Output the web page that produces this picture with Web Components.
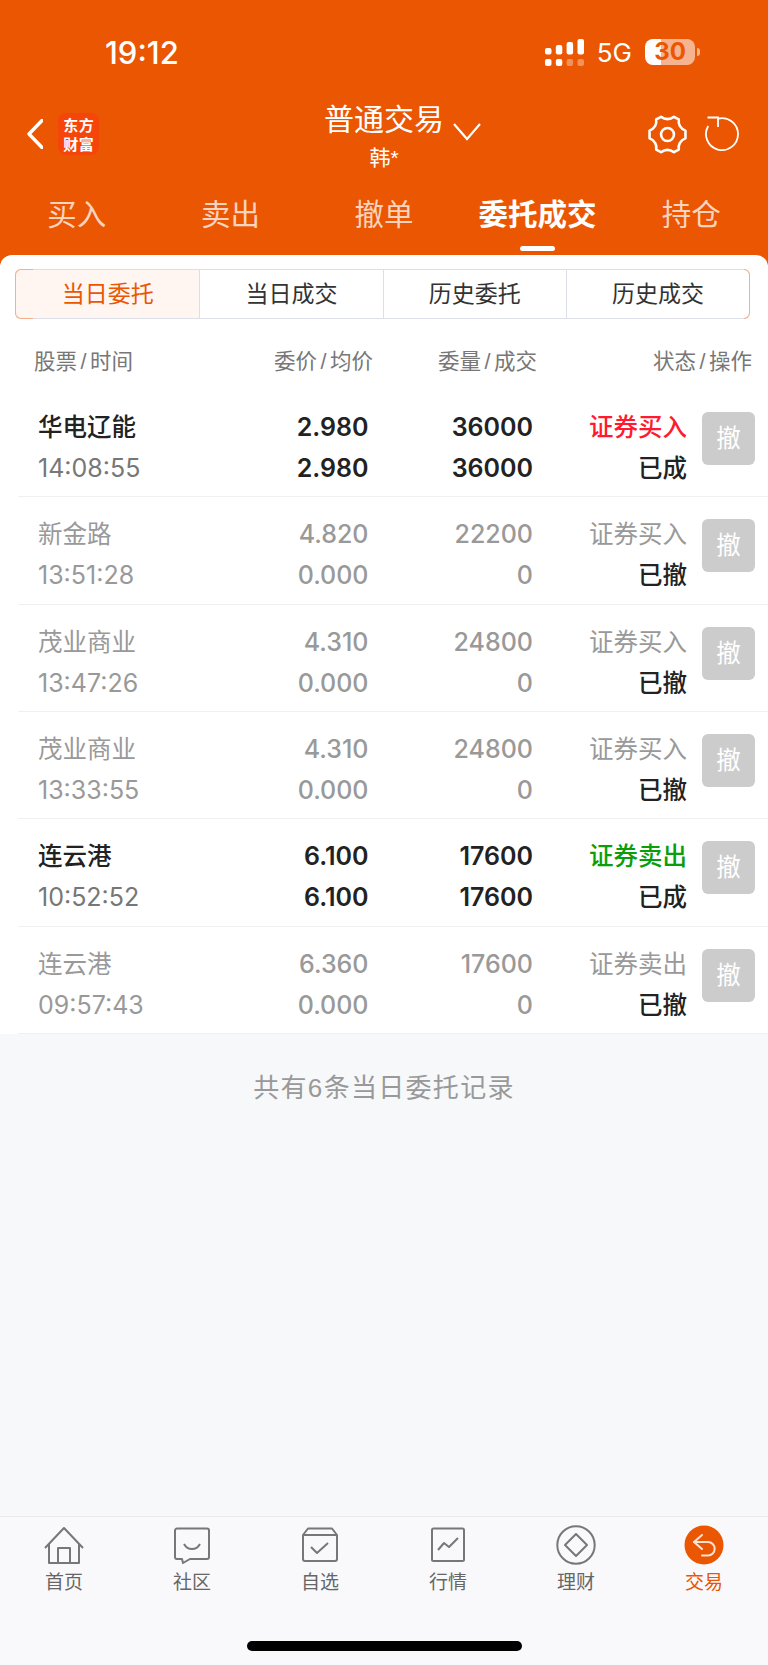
<!DOCTYPE html>
<html lang="zh">
<head>
<meta charset="utf-8">
<title>委托成交</title>
<style>
	html, body {
		margin: 0;
		padding: 0;
		background: #f7f8fa;
	}
	body {
		font-family: "Liberation Sans", "Noto Sans CJK SC", sans-serif;
	}
</style>
</head>
<body>
<trade-page>
	<status-bar slot="top"></status-bar>
	<nav-bar slot="top"></nav-bar>
	<main-tabs slot="top"></main-tabs>

	<segment-tabs items="当日委托,当日成交,历史委托,历史成交" active="0"></segment-tabs>
	<table-head></table-head>
	<order-row name="华电辽能" time="14:08:55" price="2.980" avg="2.980" qty="36000" done="36000" side="证券买入" state="已成" tone="buy"></order-row>
	<order-row name="新金路" time="13:51:28" price="4.820" avg="0.000" qty="22200" done="0" side="证券买入" state="已撤"></order-row>
	<order-row name="茂业商业" time="13:47:26" price="4.310" avg="0.000" qty="24800" done="0" side="证券买入" state="已撤"></order-row>
	<order-row name="茂业商业" time="13:33:55" price="4.310" avg="0.000" qty="24800" done="0" side="证券买入" state="已撤"></order-row>
	<order-row name="连云港" time="10:52:52" price="6.100" avg="6.100" qty="17600" done="17600" side="证券卖出" state="已成" tone="sell"></order-row>
	<order-row name="连云港" time="09:57:43" price="6.360" avg="0.000" qty="17600" done="0" side="证券卖出" state="已撤"></order-row>

	<span slot="summary">共有6条当日委托记录</span>

	<tab-bar slot="bottom"></tab-bar>
</trade-page>

<script>
const ORANGE = "#eb5602";

class TradePage extends HTMLElement {
	constructor() {
		super();
		this.attachShadow({ mode: "open" }).innerHTML = `
			<style>
				:host {
					display: flex;
					flex-direction: column;
					width: 768px;
					height: 1665px;
					overflow: hidden;
					background: #f7f8fa;
				}
				.top {
					background: ${ORANGE};
					height: 265px;
					flex: none;
				}
				.card {
					background: #fff;
					border-radius: 12px 12px 0 0;
					margin-top: -10px;
					padding-top: 14px;
					flex: none;
				}
				.summary {
					flex: 1;
					text-align: center;
					padding-top: 36px;
					font-size: 26px;
					line-height: 36px;
					color: #999;
					letter-spacing: 1.3px;
				}
			</style>
			<div class="top"><slot name="top"></slot></div>
			<div class="card"><slot></slot></div>
			<div class="summary"><slot name="summary"></slot></div>
			<slot name="bottom"></slot>`;
	}
}

class StatusBar extends HTMLElement {
	constructor() {
		super();
		this.attachShadow({ mode: "open" }).innerHTML = `
			<style>
				:host {
					display: flex;
					align-items: center;
					justify-content: space-between;
					height: 50px;
					padding: 27px 68px 0 105px;
					color: #fff;
				}
				.time {
					font-size: 31px;
					font-weight: 500;
					font-family: Inter, sans-serif;
				}
				.right {
					display: flex;
					align-items: center;
				}
				.net {
					font-family: Inter, sans-serif;
					font-size: 26px;
					margin: 0 13px;
				}
				.battery {
					width: 50px;
					height: 26px;
					border-radius: 8px;
					font: 700 24px/26px Inter, sans-serif;
					color: ${ORANGE};
					text-align: center;
					background: linear-gradient(90deg, #fff 32%, #f6b38f 32%);
				}
				.nub {
					width: 3px;
					height: 8px;
					margin-left: 2px;
					background: #f6b38f;
					border-radius: 0 3px 3px 0;
				}
			</style>
			<span class="time">19:12</span>
			<span class="right">
				<svg width="39" height="27" viewBox="0 0 39 27" fill="#fff">
					<rect x="0" y="9" width="6.500" height="6.500" rx="2"/>
					<rect x="10.800" y="6" width="6.500" height="9.500" rx="2"/>
					<rect x="21.600" y="3" width="6.500" height="12.500" rx="2"/>
					<rect x="32.500" y="0" width="6.500" height="15.500" rx="2"/>
					<rect x="0" y="20" width="6.500" height="7" rx="2"/>
					<rect x="10.800" y="20" width="6.500" height="7" rx="2"/>
					<rect x="21.600" y="20" width="6.500" height="7" rx="2" opacity=".35"/>
					<rect x="32.500" y="20" width="6.500" height="7" rx="2" opacity=".35"/>
				</svg>
				<span class="net">5G</span>
				<span class="battery">30</span>
				<span class="nub"></span>
			</span>`;
	}
}

class NavBar extends HTMLElement {
	constructor() {
		super();
		this.attachShadow({ mode: "open" }).innerHTML = `
			<style>
				:host {
					display: grid;
					grid-template-columns: 1fr auto 1fr;
					height: 95px;
					padding: 23px 27px 0 27px;
					color: #fff;
				}
				.left, .right {
					display: flex;
					align-items: center;
					padding-bottom: 27px;
				}
				.left {
					gap: 15px;
				}
				.right {
					justify-content: flex-end;
					gap: 16px;
				}
				.logo {
					width: 41px;
					height: 42px;
					border-radius: 8px;
					background: #f6450a;
					display: grid;
					grid-template-columns: 1fr 1fr;
					justify-items: center;
					align-items: center;
					font: 700 15px/19px "Noto Sans CJK SC", sans-serif;
					padding: 2px 5px;
					box-sizing: border-box;
				}
				.center {
					position: relative;
					text-align: center;
				}
				.title {
					font-size: 30px;
					line-height: 40px;
				}
				.user {
					font-size: 21px;
					line-height: 26px;
					margin-top: 5px;
				}
				.chevron {
					position: absolute;
					top: 23px;
					left: calc(100% + 9px);
				}
			</style>
			<div class="left">
				<svg width="16" height="30" viewBox="0 0 16 30" fill="none" stroke="#fff" stroke-width="3.400" stroke-linecap="round" stroke-linejoin="round">
					<path d="M15 1.500 2 15l13 13.500"/>
				</svg>
				<div class="logo"><span>东</span><span>方</span><span>财</span><span>富</span></div>
			</div>
			<div class="center">
				<div class="title">普通交易</div>
				<div class="user">韩*</div>
				<svg class="chevron" width="28" height="18" viewBox="0 0 28 18" fill="none" stroke="#fff" stroke-width="2.200">
					<path d="M1 1l13 15L27 1"/>
				</svg>
			</div>
			<div class="right">
				<svg width="43" height="43" viewBox="0 0 40 40" fill="none" stroke="#fff" stroke-width="2.400" stroke-linejoin="round">
					<path d="M14 3.500c2 1.600 3.800 2.200 6 2.200s4-.6 6-2.200l4.500 2.500c-.4 2.600 0 4.500 1.100 6.300 1.100 1.900 2.600 3.200 5.100 4.100v7.200c-2.500.9-4 2.200-5.100 4.100-1.100 1.800-1.500 3.700-1.100 6.300l-4.500 2.500c-2-1.600-3.800-2.200-6-2.200s-4 .6-6 2.200l-4.500-2.500c.4-2.600 0-4.500-1.100-6.300-1.100-1.900-2.600-3.200-5.100-4.100v-7.200c2.500-.9 4-2.200 5.100-4.100 1.100-1.800 1.500-3.700 1.100-6.300z"/>
					<circle cx="20" cy="20" r="6"/>
				</svg>
				<svg width="36" height="36" viewBox="0 0 36 36" fill="none" stroke="#fff" stroke-width="1.800">
					<path d="M13 2.600A16 16 0 1 1 3.200 10"/>
					<path d="M2.500 1.500h10.500v9.500"/>
				</svg>
			</div>`;
	}
}

class MainTabs extends HTMLElement {
	constructor() {
		super();
		let items = ["买入", "卖出", "撤单", "委托成交", "持仓"];
		this.attachShadow({ mode: "open" }).innerHTML = `
			<style>
				:host {
					display: grid;
					grid-template-columns: repeat(5, 1fr);
				}
				.tab {
					position: relative;
					text-align: center;
					font-size: 29.500px;
					line-height: 40px;
					color: rgba(255, 255, 255, 0.75);
					padding-bottom: 20px;
				}
				.on {
					color: #fff;
					font-weight: 700;
				}
				.on::after {
					content: "";
					position: absolute;
					left: 59px;
					bottom: 4px;
					width: 35px;
					height: 5px;
					border-radius: 3px;
					background: #fff;
				}
			</style>
			${items.map((t, i) => `<div class="tab ${i === 3 ? "on" : ""}">${t}</div>`).join("")}`;
	}
}

class SegmentTabs extends HTMLElement {
	constructor() {
		super();
		let items = this.getAttribute("items").split(",");
		let active = Number(this.getAttribute("active"));
		this.attachShadow({ mode: "open" }).innerHTML = `
			<style>
				:host {
					display: grid;
					position: relative;
					grid-template-columns: repeat(4, 1fr);
					margin: 0 18px 0 15px;
					height: 50px;
					box-sizing: border-box;
					border: 1px solid #dcdfe8;
					border-radius: 6px;
				}
				:host::before, :host::after {
					content: "";
					position: absolute;
					top: -1px;
					bottom: -1px;
					width: 17px;
					border: 1px solid #f4b08c;
					pointer-events: none;
				}
				:host::before {
					left: -1px;
					border-right: 0;
					border-radius: 6px 0 0 6px;
				}
				:host::after {
					right: -1px;
					width: 5px;
					border-left: 0;
					border-radius: 0 6px 6px 0;
				}
				.seg {
					font-size: 23px;
					line-height: 48px;
					text-align: center;
					color: #333;
					border-left: 1px solid #dcdfe8;
				}
				.seg:first-of-type {
					border-left: 0;
					border-radius: 5px 0 0 5px;
				}
				.on {
					color: ${ORANGE};
					background: #fff5f1;
				}
			</style>
			${items.map((t, i) => `<div class="seg ${i === active ? "on" : ""}">${t}</div>`).join("")}`;
	}
}

class TableHead extends HTMLElement {
	constructor() {
		super();
		let cell = (a, b) => `<span>${a}<i>/</i>${b}</span>`;
		this.attachShadow({ mode: "open" }).innerHTML = `
			<style>
				:host {
					display: grid;
					grid-template-columns: 166px 173px 164px 1fr;
					padding: 0 16px 13px 34px;
					height: 71px;
					font-size: 21.500px;
					line-height: 30px;
					color: #777;
					align-items: end;
					box-sizing: border-box;
				}
				span:not(:first-of-type) {
					text-align: right;
				}
				i {
					font-style: normal;
					margin: 0 3.500px;
				}
			</style>
			${cell("股票", "时间")}${cell("委价", "均价")}${cell("委量", "成交")}${cell("状态", "操作")}`;
	}
}

class OrderRow extends HTMLElement {
	constructor() {
		super();
		let a = (n) => this.getAttribute(n);
		let tone = a("tone");
		this.attachShadow({ mode: "open" }).innerHTML = `
			<style>
				:host {
					display: block;
				}
				.row {
					display: grid;
					grid-template-columns: 161px 169.500px 164.500px 154px 53px;
					grid-auto-rows: 41px;
					padding: 17px 13px 7.330px 38px;
					font-size: 24.500px;
					line-height: 41px;
					align-items: center;
				}
				.line {
					margin-left: 18px;
					border-bottom: 1px solid #f0f0f0;
				}
				.name {
					color: ${tone ? "#222" : "#999"};
					font-weight: ${tone ? 500 : 400};
				}
				.time {
					color: ${tone ? "#777" : "#999"};
					font-family: Inter, sans-serif;
					font-size: 25px;
					white-space: nowrap;
				}
				.num {
					text-align: right;
					font-family: Inter, sans-serif;
					font-size: 25px;
					font-weight: ${tone ? 600 : 500};
					color: ${tone ? "#222" : "#999"};
				}
				.side {
					text-align: right;
					color: ${tone === "buy" ? "#ff1a2e" : tone === "sell" ? "#0a9e0a" : "#999"};
					font-weight: ${tone ? 500 : 400};
				}
				.state {
					text-align: right;
					color: #222;
					font-weight: 500;
				}
				.btn {
					grid-column: 5;
					grid-row: 1 / span 2;
					align-self: start;
					width: 53px;
					height: 53px;
					margin: 5px 0 0 15px;
					background: #ccc;
					color: #fff;
					border-radius: 6px;
					text-align: center;
					line-height: 53px;
				}
			</style>
			<div class="row">
				<span class="name">${a("name")}</span>
				<span class="num">${a("price")}</span>
				<span class="num">${a("qty")}</span>
				<span class="side">${a("side")}</span>
				<span class="btn">撤</span>
				<span class="time">${a("time")}</span>
				<span class="num">${a("avg")}</span>
				<span class="num">${a("done")}</span>
				<span class="state">${a("state")}</span>
			</div>
			<div class="line"></div>`;
	}
}

const TAB_ICONS = {
	home: `<path d="M1 23 20 3l19 20"/><path d="M5 19v19h30V19"/><path d="M14 38V23h12v15"/>`,
	chat: `<path d="M5 3.500h30a2 2 0 0 1 2 2V32a2 2 0 0 1-2 2H18l-7 4-1-4H5a2 2 0 0 1-2-2V5.500a2 2 0 0 1 2-2z"/><path d="M12 19c2 3.500 4.800 5 8 5s6-1.500 8-5"/>`,
	star: `<path d="M3 10 8 3.500h24L37 10v24a2 2 0 0 1-2 2H5a2 2 0 0 1-2-2z"/><path d="M3 10h34"/><path d="M11 22l6 6 11-10"/>`,
	chart: `<rect x="4" y="3.500" width="32" height="32.500" rx="1.500"/><path d="M10 25l6-7 5 4 9-9"/>`,
	money: `<circle cx="20" cy="20" r="18.700"/><path d="M20 9 31 20 20 31 9 20z"/>`
};

class TabItem extends HTMLElement {
	constructor() {
		super();
		let icon = this.getAttribute("icon");
		let on = this.hasAttribute("active");
		this.attachShadow({ mode: "open" }).innerHTML = `
			<style>
				:host {
					display: flex;
					flex-direction: column;
					align-items: center;
					padding-top: 8px;
				}
				svg {
					display: block;
					width: 40px;
					height: 40px;
				}
				.label {
					font-size: 19px;
					line-height: 26px;
					margin-top: 5px;
					color: ${on ? ORANGE : "#666"};
				}
			</style>
			${on
				? `<svg viewBox="0 0 40 40" fill="none" stroke="#fbe3d6" stroke-width="2" stroke-linecap="round" stroke-linejoin="round"><circle cx="20" cy="20" r="19.500" fill="${ORANGE}" stroke="none"/><path d="M18 10l-8 7 8 7"/><path d="M10 17h14a6.700 6.700 0 0 1 0 13.400h-6"/></svg>`
				: `<svg viewBox="0 0 40 40" fill="none" stroke="#777" stroke-width="2" stroke-linejoin="round">${TAB_ICONS[icon]}</svg>`}
			<span class="label"><slot></slot></span>`;
	}
}

class HomeIndicator extends HTMLElement {
	constructor() {
		super();
		this.attachShadow({ mode: "open" }).innerHTML = `
			<style>
				:host {
					display: block;
					width: 275px;
					height: 10px;
					margin: 0 auto;
					background: #000;
					border-radius: 5px;
				}
			</style>`;
	}
}

class TabBar extends HTMLElement {
	constructor() {
		super();
		this.attachShadow({ mode: "open" }).innerHTML = `
			<style>
				:host {
					display: block;
					height: 149px;
					box-sizing: border-box;
					border-top: 1px solid #e9e9ec;
					background: #f9f9fb;
				}
				.items {
					display: grid;
					grid-template-columns: repeat(6, 1fr);
					height: 124px;
				}
			</style>
			<div class="items">
				<tab-item icon="home">首页</tab-item>
				<tab-item icon="chat">社区</tab-item>
				<tab-item icon="star">自选</tab-item>
				<tab-item icon="chart">行情</tab-item>
				<tab-item icon="money">理财</tab-item>
				<tab-item active>交易</tab-item>
			</div>
			<home-indicator></home-indicator>`;
	}
}

customElements.define("trade-page", TradePage);
customElements.define("status-bar", StatusBar);
customElements.define("nav-bar", NavBar);
customElements.define("main-tabs", MainTabs);
customElements.define("segment-tabs", SegmentTabs);
customElements.define("table-head", TableHead);
customElements.define("order-row", OrderRow);
customElements.define("tab-item", TabItem);
customElements.define("home-indicator", HomeIndicator);
customElements.define("tab-bar", TabBar);
</script>
</body>
</html>
